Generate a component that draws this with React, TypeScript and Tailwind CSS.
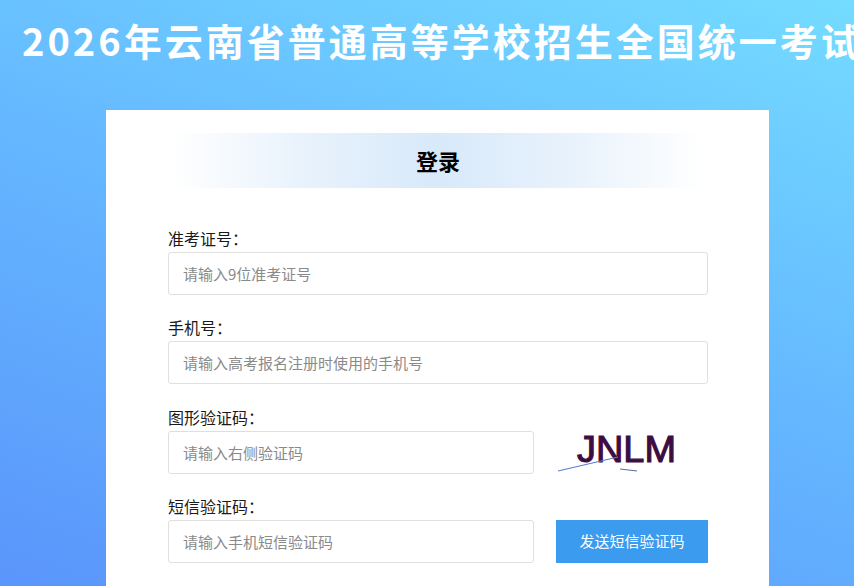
import React, { useState } from 'react';

const CJK = "font-['Noto_Sans_CJK_SC','Noto_Sans',sans-serif]";

function Field({ label, children, className = 'mb-5' }: { label: string; children: React.ReactNode; className?: string }) {
  return (
    <div className={className}>
      <div className="mb-0.5 text-[16px] leading-6 text-[#1a1a1a]">{label}</div>
      {children}
    </div>
  );
}

function TextInput({ placeholder, className = '' }: { placeholder: string; className?: string }) {
  const [v, setV] = useState('');
  return (
    <input
      value={v}
      onChange={(e) => setV(e.target.value)}
      placeholder={placeholder}
      className={`h-[43px] rounded-[3px] border border-[#dfdfdf] bg-white px-[14px] text-[15px] text-[#333] outline-none placeholder:text-[#8a8a8a] ${className}`}
    />
  );
}

// simple captcha picture
function Captcha() {
  return (
    <svg width="126" height="52" viewBox="0 0 126 52" className="block">
      <text x="20" y="37" fontFamily="Liberation Sans, sans-serif" fontSize="37" fill="#3d0c42" stroke="#3d0c42" strokeWidth="1.1" textLength="99" lengthAdjust="spacingAndGlyphs">
        JNLM
      </text>
      <line x1="1" y1="46" x2="61" y2="32" stroke="#5a7fd0" strokeWidth="1.2" />
      <line x1="63" y1="44" x2="80" y2="46" stroke="#5a6fa0" strokeWidth="1.2" />
    </svg>
  );
}

export default function App() {
  return (
    <div className={`h-[586px] w-[854px] overflow-hidden bg-[linear-gradient(20deg,#5a95fb_0%,#64b6ff_50%,#74dcff_100%)] ${CJK}`}>
      <h1 className="whitespace-nowrap pl-[22px] pt-[16px] text-[38px] font-bold leading-[48px] tracking-[3px] text-white">
        2026年云南省普通高等学校招生全国统一考试
      </h1>

      <div className="ml-[106px] mt-[46px] w-[663px] bg-white pl-[62px] pr-[61px] pt-[23px] pb-10">
        <div className="mx-[4px] flex h-[55px] items-center justify-center bg-[linear-gradient(90deg,#ffffff_0%,#e8f2fc_25%,#d8e9fa_50%,#e8f2fc_75%,#ffffff_100%)]">
          <span className="text-[22px] font-bold text-black">登录</span>
        </div>

        <div className="mt-[38px]">
          <Field label="准考证号：">
            <TextInput placeholder="请输入9位准考证号" className="w-full" />
          </Field>
          <Field label="手机号：" className="mb-[21px]">
            <TextInput placeholder="请输入高考报名注册时使用的手机号" className="w-full" />
          </Field>
          <Field label="图形验证码：">
            <div className="flex h-[43px] items-center">
              <TextInput placeholder="请输入右侧验证码" className="w-[366px]" />
              <div className="ml-[23px] -mt-[4px]">
                <Captcha />
              </div>
            </div>
          </Field>
          <Field label="短信验证码：">
            <div className="flex items-center justify-between">
              <TextInput placeholder="请输入手机短信验证码" className="w-[366px]" />
              <button className="h-[43px] w-[152px] bg-[#3a9bef] text-[15px] text-white">发送短信验证码</button>
            </div>
          </Field>
        </div>
      </div>
    </div>
  );
}
